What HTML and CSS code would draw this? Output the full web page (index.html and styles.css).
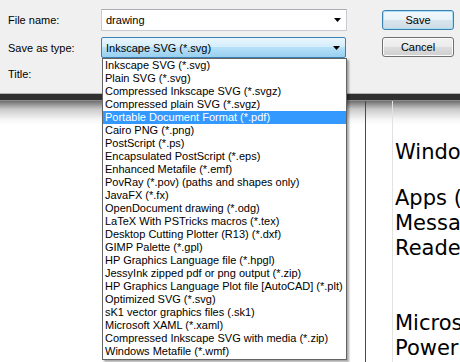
FILE: index.html
```html
<!DOCTYPE html>
<html>
<head>
<meta charset="utf-8">
<link rel="stylesheet" href="styles.css">
</head>
<body>
<div class="dialog">
  <div class="row r1">
    <span class="label">File name:</span>
    <div class="field input">
      <span class="value">drawing</span>
      <svg class="arrow" width="7" height="4" viewBox="0 0 7 4"><polygon points="0,0 7,0 3.5,4" fill="#000"/></svg>
    </div>
    <button class="btn default">Save</button>
  </div>
  <div class="row r2">
    <span class="label">Save as type:</span>
    <div class="combo-wrap">
      <div class="field combo">
        <span class="value">Inkscape SVG (*.svg)</span>
        <svg class="arrow" width="7" height="4" viewBox="0 0 7 4"><polygon points="0,0 7,0 3.5,4" fill="#000"/></svg>
      </div>
      <ul class="list">
        <li>Inkscape SVG (*.svg)</li>
        <li>Plain SVG (*.svg)</li>
        <li>Compressed Inkscape SVG (*.svgz)</li>
        <li>Compressed plain SVG (*.svgz)</li>
        <li class="sel">Portable Document Format (*.pdf)</li>
        <li>Cairo PNG (*.png)</li>
        <li>PostScript (*.ps)</li>
        <li>Encapsulated PostScript (*.eps)</li>
        <li>Enhanced Metafile (*.emf)</li>
        <li>PovRay (*.pov) (paths and shapes only)</li>
        <li>JavaFX (*.fx)</li>
        <li>OpenDocument drawing (*.odg)</li>
        <li>LaTeX With PSTricks macros (*.tex)</li>
        <li>Desktop Cutting Plotter (R13) (*.dxf)</li>
        <li>GIMP Palette (*.gpl)</li>
        <li>HP Graphics Language file (*.hpgl)</li>
        <li>JessyInk zipped pdf or png output (*.zip)</li>
        <li>HP Graphics Language Plot file [AutoCAD] (*.plt)</li>
        <li>Optimized SVG (*.svg)</li>
        <li>sK1 vector graphics files (.sk1)</li>
        <li>Microsoft XAML (*.xaml)</li>
        <li>Compressed Inkscape SVG with media (*.zip)</li>
        <li>Windows Metafile (*.wmf)</li>
      </ul>
    </div>
    <button class="btn cancel">Cancel</button>
  </div>
  <div class="row r3">
    <span class="label">Title:</span>
  </div>
</div>
<div class="band"></div>
<div class="doc">
  <div class="page"></div>
  <div class="gutter"></div>
  <div class="text">
    <p>Windows Live</p>
    <p class="p2">Apps (Mail,<br>Messaging,<br>Reader)</p>
    <p class="p3">Microsoft<br>PowerPoint</p>
  </div>
</div>
</body>
</html>
```
FILE: styles.css
```css
html, body {
  margin: 0;
  padding: 0;
}
body {
  width: 460px;
  height: 362px;
  overflow: hidden;
  background: #fff;
  font-family: "Liberation Sans", Arial, sans-serif;
  font-size: 11px;
  color: #000;
}
.dialog {
  height: 93px;
  box-sizing: border-box;
  background: #f0f0f0;
  padding: 9px 0 0 8px;
}
.row {
  display: flex;
  align-items: center;
}
.label {
  width: 93px;
  flex: none;
}
.r1 {
  height: 22px;
}
.r2 {
  height: 21px;
  margin-top: 6px;
}
.r3 {
  height: 14px;
  margin-top: 9px;
}
.field {
  display: flex;
  align-items: center;
  box-sizing: border-box;
  height: 100%;
}
.field .value {
  flex: 1;
}
.field .arrow {
  flex: none;
  margin-right: 5px;
}
.input {
  width: 246px;
  background: #fff;
  border: 1px solid #c9cbd1;
  border-top-color: #abadb3;
  padding-left: 4px;
}
.combo-wrap {
  position: relative;
  width: 245px;
  height: 21px;
  flex: none;
}
.combo {
  width: 245px;
  border: 1px solid #3c7fb1;
  border-radius: 2px;
  background: linear-gradient(#eaf6fd 0%, #d4eefc 45%, #b6e0f8 50%, #98cff0 100%);
  padding-left: 4px;
}
.list {
  position: absolute;
  top: 21px;
  left: 1px;
  z-index: 5;
  width: 245px;
  box-sizing: border-box;
  margin: 0;
  padding: 0 0 1px 0;
  list-style: none;
  background: #fff;
  border: 1px solid #646464;
  box-shadow: 2px 2px 2px rgba(0, 0, 0, 0.35);
}
.list li {
  height: 13px;
  line-height: 13px;
  padding-left: 2px;
  white-space: nowrap;
  overflow: hidden;
}
.list li.sel {
  background: #3399ff;
  color: #fff;
}
.btn {
  flex: none;
  width: 72px;
  height: 21px;
  padding: 0;
  border: 1px solid #707070;
  border-radius: 3px;
  background: linear-gradient(#f2f2f2 0%, #ebebeb 50%, #dddddd 51%, #cfcfcf 100%);
  box-shadow: inset 0 0 0 1px #fbfbfb;
  font-family: "Liberation Sans", Arial, sans-serif;
  font-size: 11px;
  color: #000;
  align-self: flex-start;
}
.btn.default {
  margin-left: 35px;
  margin-top: 1px;
  height: 20px;
  border-color: #3c7fb1;
  box-shadow: inset 0 0 0 1px #a9def5;
  background: linear-gradient(#f1f8fc 0%, #e8f2f8 50%, #d9e5ee 51%, #cddbe5 100%);
}
.btn.cancel {
  margin-left: 36px;
  height: 20px;
}
.band {
  height: 6px;
  background: #303030;
  border-top: 1px solid #b4b4b4;
  border-bottom: 1px solid #8c8c8c;
}
.doc {
  display: flex;
  height: 261px;
  background: linear-gradient(#6e6e6e 0px, #c8c8c8 8px, #f4f4f4 18px, #ffffff 24px);
}
.page {
  width: 365px;
  flex: none;
  border-right: 1px solid #4a4a4a;
}
.gutter {
  width: 26px;
  flex: none;
  border-right: 1px solid #e2e2e2;
}
.text {
  flex: 1;
  overflow: hidden;
  padding: 39px 0 0 2px;
  font-family: "DejaVu Sans", Verdana, sans-serif;
  font-size: 21px;
  line-height: 25px;
  white-space: nowrap;
}
.text p {
  margin: 0;
}
.text .p2 {
  margin-top: 21px;
}
.text .p3 {
  margin-top: 50px;
}
```
